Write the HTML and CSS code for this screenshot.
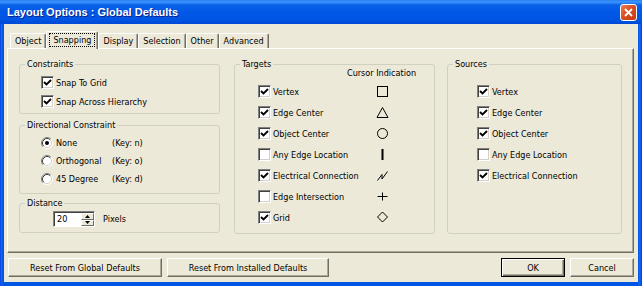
FILE: index.html
```html
<!DOCTYPE html>
<html>
<head>
  <title>Layout Options : Global Defaults</title>
  <link rel="stylesheet" href="styles.css">
</head>
<body>

<svg class="defs">
  <defs>
    <symbol id="tick" viewBox="0 0 9 9">
      <polyline points="1,4 3.5,6.5 8,2" fill="none" stroke="#000" stroke-width="1.9"/>
    </symbol>
    <symbol id="radio" viewBox="0 0 12 12">
      <circle cx="6" cy="6" r="5" fill="#fff"/>
      <path d="M2.11 9.89A5.5 5.5 0 0 1 9.89 2.11" fill="none" stroke="#808080"/>
      <path d="M2.82 9.18A4.5 4.5 0 0 1 9.18 2.82" fill="none" stroke="#404040"/>
      <path d="M9.89 2.11A5.5 5.5 0 0 1 2.11 9.89" fill="none" stroke="#fff"/>
      <path d="M9.18 2.82A4.5 4.5 0 0 1 2.82 9.18" fill="none" stroke="#d4d0c8"/>
    </symbol>
  </defs>
</svg>

<div class="window">
  <div class="titlebar">
    <span class="title">Layout Options : Global Defaults</span>
    <span class="close">
      <svg width="9" height="9" viewBox="0 0 9 9"><path d="M1 1L8 8M8 1L1 8" stroke="#fff" stroke-width="1.8"/></svg>
    </span>
  </div>

  <div class="client">
    <div class="tabs">
      <span class="tab">Object</span>
      <span class="tab active"><span class="focus">Snapping</span></span>
      <span class="tab">Display</span>
      <span class="tab">Selection</span>
      <span class="tab">Other</span>
      <span class="tab">Advanced</span>
    </div>

    <div class="panel">
      <div class="col">
        <div class="group constraints">
          <span class="legend">Constraints</span>
          <div class="row"><span class="cb"><svg><use href="#tick"/></svg></span>Snap To Grid</div>
          <div class="row"><span class="cb"><svg><use href="#tick"/></svg></span>Snap Across Hierarchy</div>
        </div>

        <div class="group direction">
          <span class="legend">Directional Constraint</span>
          <div class="row"><svg class="rb"><use href="#radio"/><circle cx="6" cy="6" r="2"/></svg><span class="opt">None</span>(Key: n)</div>
          <div class="row"><svg class="rb"><use href="#radio"/></svg><span class="opt">Orthogonal</span>(Key: o)</div>
          <div class="row"><svg class="rb"><use href="#radio"/></svg><span class="opt">45 Degree</span>(Key: d)</div>
        </div>

        <div class="group distance">
          <span class="legend">Distance</span>
          <div class="spin">
            <span class="val">20</span>
            <span class="arrows">
              <span class="arr"><svg width="5" height="3" viewBox="0 0 5 3"><path d="M2.5 0L5 3H0z"/></svg></span>
              <span class="arr"><svg width="5" height="3" viewBox="0 0 5 3"><path d="M0 0H5L2.5 3z"/></svg></span>
            </span>
          </div>
          <span class="unit">Pixels</span>
        </div>
      </div>

      <div class="group targets">
        <span class="legend">Targets</span>
        <div class="head">Cursor Indication</div>
        <div class="row"><span class="lbl"><span class="cb"><svg><use href="#tick"/></svg></span>Vertex</span>
          <svg class="ico" viewBox="0 0 13 13"><rect x="1.5" y="1.5" width="10" height="10"/></svg></div>
        <div class="row"><span class="lbl"><span class="cb"><svg><use href="#tick"/></svg></span>Edge Center</span>
          <svg class="ico" viewBox="0 0 13 13"><polygon points="6.5,1.5 12,11.5 1,11.5"/></svg></div>
        <div class="row"><span class="lbl"><span class="cb"><svg><use href="#tick"/></svg></span>Object Center</span>
          <svg class="ico" viewBox="0 0 13 13"><circle cx="6.5" cy="6.5" r="5"/></svg></div>
        <div class="row"><span class="lbl"><span class="cb"></span>Any Edge Location</span>
          <svg class="ico" viewBox="0 0 13 13"><rect class="solid" x="5.5" y="1" width="2" height="11"/></svg></div>
        <div class="row"><span class="lbl"><span class="cb"><svg><use href="#tick"/></svg></span>Electrical Connection</span>
          <svg class="ico" viewBox="0 0 13 13"><path d="M1.5 11.5L6 5.5V10L11.5 2.5"/></svg></div>
        <div class="row"><span class="lbl"><span class="cb"></span>Edge Intersection</span>
          <svg class="ico" viewBox="0 0 13 13"><path d="M1.5 6.5H11.5M6.5 2.5V10.5"/></svg></div>
        <div class="row"><span class="lbl"><span class="cb"><svg><use href="#tick"/></svg></span>Grid</span>
          <svg class="ico" viewBox="0 0 13 13"><polygon points="6.5,1 11.5,6 6.5,11 1.5,6"/></svg></div>
      </div>

      <div class="group sources">
        <span class="legend">Sources</span>
        <div class="row"><span class="cb"><svg><use href="#tick"/></svg></span>Vertex</div>
        <div class="row"><span class="cb"><svg><use href="#tick"/></svg></span>Edge Center</div>
        <div class="row"><span class="cb"><svg><use href="#tick"/></svg></span>Object Center</div>
        <div class="row"><span class="cb"></span>Any Edge Location</div>
        <div class="row"><span class="cb"><svg><use href="#tick"/></svg></span>Electrical Connection</div>
      </div>
    </div>

    <div class="buttons">
      <button class="btn global">Reset From Global Defaults</button>
      <button class="btn installed">Reset From Installed Defaults</button>
      <button class="btn ok">OK</button>
      <button class="btn cancel">Cancel</button>
    </div>
  </div>
</div>

</body>
</html>
```

FILE: styles.css
```css
body {
  margin: 0;
  background: #fff;
  font-family: "DejaVu Sans Condensed", "DejaVu Sans", sans-serif;
  font-stretch: condensed;
  font-size: 9px;
  color: #000;
}
.defs {
  position: absolute;
  width: 0;
  height: 0;
}
.window {
  width: 642px;
  height: 286px;
  display: flex;
  flex-direction: column;
  background: linear-gradient(90deg, #0831d9 0, #166aee 1px, #0055e5 3px, #0055e5 638px, #166aee 640px, #0831d9 642px);
}
.titlebar {
  height: 24px;
  flex: none;
  display: flex;
  align-items: center;
  padding: 0 5px 0 7px;
  background: linear-gradient(#2a7ff2 0, #3d95ff 2px, #0a61e8 5px, #0058e6 12px, #0054e3 20px, #0048d6 24px);
}
.title {
  flex: 1;
  color: #fff;
  font-family: "Liberation Sans", Arial, sans-serif;
  font-size: 11px;
  font-weight: bold;
  text-shadow: 1px 1px #0a1e8c;
}
.close {
  width: 17px;
  height: 17px;
  box-sizing: border-box;
  border: 1px solid #fff;
  border-radius: 3px;
  background: linear-gradient(135deg, #e97d59 0, #dc4f24 45%, #c53a10 100%);
  display: flex;
  align-items: center;
  justify-content: center;
}
.client {
  flex: 1;
  margin: 0 4px 4px 4px;
  background: #ece9d8;
  display: flex;
  flex-direction: column;
}

/* tabs */
.tabs {
  display: flex;
  align-items: flex-end;
  height: 17px;
  margin: 7px 0 0 6px;
}
.tab {
  height: 15px;
  box-sizing: border-box;
  padding: 0 4px;
  line-height: 14px;
  border: 1px solid;
  border-color: #fff #716f64 transparent #fff;
  border-bottom: none;
  border-radius: 2px 2px 0 0;
  box-shadow: inset -1px 0 #aca899;
}
.tab.active {
  height: 18px;
  margin-bottom: -1px;
  padding: 1px 2px 0 2px;
  position: relative;
  z-index: 1;
  background: #ece9d8;
}
.focus {
  display: block;
  height: 14px;
  box-sizing: border-box;
  padding: 0 3px;
  line-height: 12px;
  border: 1px dotted #000;
}

/* tab page */
.panel {
  height: 205px;
  box-sizing: border-box;
  margin: 0 4px 0 3px;
  padding: 15px 0 0 11px;
  border: 1px solid;
  border-color: #fff #716f64 #716f64 #fff;
  box-shadow: inset -1px -1px #aca899;
  display: flex;
  align-items: flex-start;
}
.col {
  width: 201px;
  display: flex;
  flex-direction: column;
}
.group {
  position: relative;
  box-sizing: border-box;
  border: 1px solid #d0d0bf;
  border-radius: 3px;
}
.legend {
  position: absolute;
  left: 5px;
  top: -7px;
  padding: 0 2px;
  line-height: 13px;
  background: #ece9d8;
}
.row {
  display: flex;
  align-items: center;
  white-space: nowrap;
}
.cb {
  width: 13px;
  height: 13px;
  flex: none;
  box-sizing: border-box;
  margin-right: 2px;
  border: 1px solid;
  border-color: #808080 #fff #fff #808080;
  box-shadow: inset 1px 1px #404040, inset -1px -1px #d4d0c8;
  background: #fff;
}
.cb svg {
  display: block;
  width: 9px;
  height: 9px;
  margin: 1px;
}

.constraints {
  height: 50px;
  padding: 8px 0 0 21px;
}
.constraints .row {
  height: 19px;
}
.direction {
  height: 69px;
  margin-top: 11px;
  padding: 8px 0 0 21px;
}
.direction .row {
  height: 18px;
}
.rb {
  width: 12px;
  height: 12px;
  flex: none;
  margin-right: 3px;
}
.opt {
  width: 56px;
}
.distance {
  height: 30px;
  margin-top: 9px;
  padding: 7px 0 0 33px;
  display: flex;
  align-items: center;
  align-self: stretch;
}
.distance {
  align-items: flex-start;
}
.spin {
  width: 42px;
  height: 16px;
  box-sizing: border-box;
  display: flex;
  border: 1px solid;
  border-color: #808080 #fff #fff #808080;
  box-shadow: inset 1px 1px #404040;
  background: #fff;
}
.val {
  flex: 1;
  padding-left: 3px;
  line-height: 14px;
}
.arrows {
  width: 13px;
  display: flex;
  flex-direction: column;
  padding: 1px 0 0 0;
}
.arr {
  flex: 1;
  display: flex;
  align-items: center;
  justify-content: center;
  box-sizing: border-box;
  background: #ece9d8;
  border: 1px solid;
  border-color: #fff #716f64 #716f64 #fff;
}
.unit {
  margin-left: 8px;
  line-height: 16px;
}

.targets, .sources {
  height: 170px;
}
.targets {
  width: 201px;
  margin-left: 14px;
  padding: 2px 0 0 23px;
}
.head {
  margin: 0 0 1px 89px;
  line-height: 13px;
}
.targets .row, .sources .row {
  height: 21px;
}
.lbl {
  width: 114px;
  display: flex;
  align-items: center;
}
.ico {
  width: 13px;
  height: 13px;
  margin-left: 4px;
  fill: none;
  stroke: #000;
  stroke-width: 1;
}
.ico .solid {
  fill: #000;
  stroke: none;
}
.sources {
  width: 175px;
  margin-left: 12px;
  padding: 16px 0 0 29px;
}

/* dialog buttons */
.buttons {
  display: flex;
  margin: 5px 4px 0 4px;
}
.btn {
  height: 19px;
  box-sizing: border-box;
  padding: 0;
  font: inherit;
  color: #000;
  background: #ece9d8;
  border: 1px solid;
  border-color: #fff #716f64 #716f64 #fff;
  box-shadow: inset -1px -1px #aca899;
}
.global {
  width: 154px;
}
.installed {
  width: 162px;
  margin-left: 5px;
}
.ok {
  width: 64px;
  margin-left: auto;
  border-color: #000;
  box-shadow: inset 1px 1px #fff, inset -1px -1px #716f64, inset -2px -2px #aca899;
}
.cancel {
  width: 64px;
  margin-left: 5px;
}
```
